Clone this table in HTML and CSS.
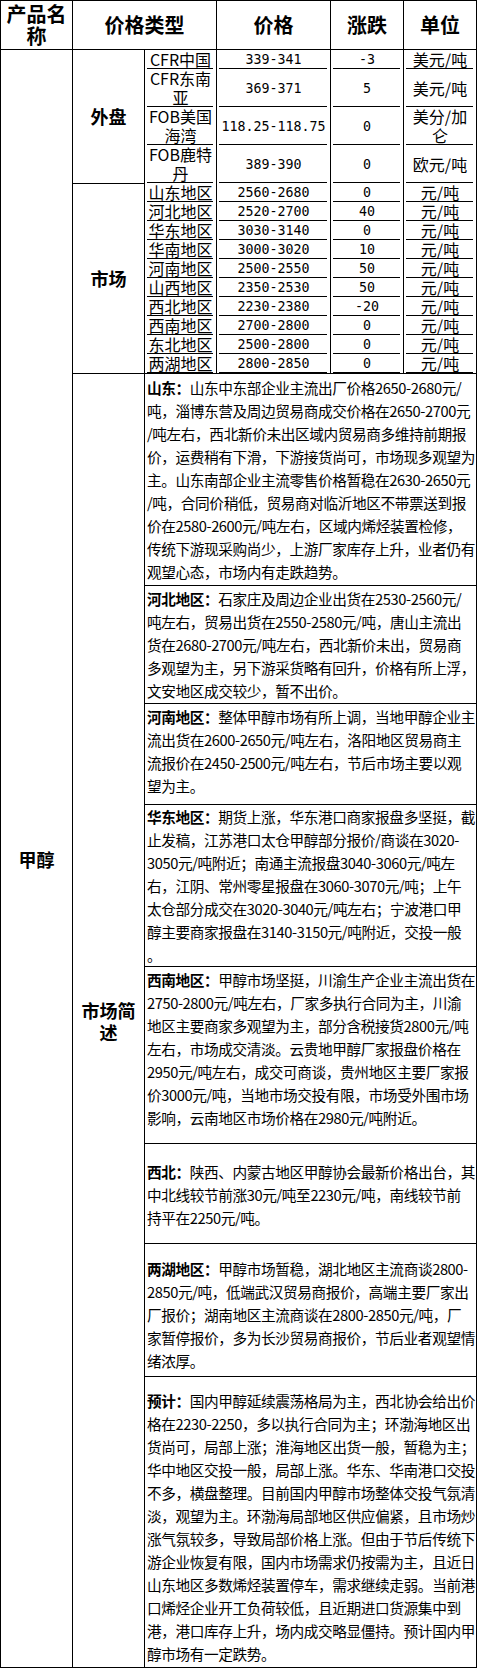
FILE: index.html
```html
<!DOCTYPE html>
<html lang="zh-CN">
<head>
<meta charset="utf-8">
<title>甲醇价格行情</title>
<link rel="stylesheet" href="styles.css">
</head>
<body>
<table class="price-table">
  <colgroup>
    <col class="c-name"><col class="c-type"><col class="c-sub"><col class="c-price"><col class="c-chg"><col class="c-unit">
  </colgroup>
  <tr class="head">
    <td>产品名称</td>
    <td colspan="2">价格类型</td>
    <td>价格</td>
    <td>涨跌</td>
    <td>单位</td>
  </tr>
  <tr>
    <td rowspan="15" class="label">甲醇</td>
    <td rowspan="4" class="label">外盘</td>
    <td class="cell">CFR中国</td><td class="cell num">339-341</td><td class="cell num">-3</td><td class="cell">美元/吨</td>
  </tr>
  <tr><td class="cell">CFR东南亚</td><td class="cell num">369-371</td><td class="cell num">5</td><td class="cell">美元/吨</td></tr>
  <tr><td class="cell">FOB美国海湾</td><td class="cell num">118.25-118.75</td><td class="cell num">0</td><td class="cell">美分/加仑</td></tr>
  <tr><td class="cell">FOB鹿特丹</td><td class="cell num">389-390</td><td class="cell num">0</td><td class="cell">欧元/吨</td></tr>
  <tr>
    <td rowspan="10" class="label">市场</td>
    <td class="cell">山东地区</td><td class="cell num">2560-2680</td><td class="cell num">0</td><td class="cell">元/吨</td>
  </tr>
  <tr><td class="cell">河北地区</td><td class="cell num">2520-2700</td><td class="cell num">40</td><td class="cell">元/吨</td></tr>
  <tr><td class="cell">华东地区</td><td class="cell num">3030-3140</td><td class="cell num">0</td><td class="cell">元/吨</td></tr>
  <tr><td class="cell">华南地区</td><td class="cell num">3000-3020</td><td class="cell num">10</td><td class="cell">元/吨</td></tr>
  <tr><td class="cell">河南地区</td><td class="cell num">2500-2550</td><td class="cell num">50</td><td class="cell">元/吨</td></tr>
  <tr><td class="cell">山西地区</td><td class="cell num">2350-2530</td><td class="cell num">50</td><td class="cell">元/吨</td></tr>
  <tr><td class="cell">西北地区</td><td class="cell num">2230-2380</td><td class="cell num">-20</td><td class="cell">元/吨</td></tr>
  <tr><td class="cell">西南地区</td><td class="cell num">2700-2800</td><td class="cell num">0</td><td class="cell">元/吨</td></tr>
  <tr><td class="cell">东北地区</td><td class="cell num">2500-2800</td><td class="cell num">0</td><td class="cell">元/吨</td></tr>
  <tr><td class="cell">两湖地区</td><td class="cell num">2800-2850</td><td class="cell num">0</td><td class="cell">元/吨</td></tr>
  <tr>
    <td class="label">市场简述</td>
    <td colspan="4" class="desc">
      <div class="blk blk-sd"><b>山东：</b>山东中东部企业主流出厂价格2650-2680元/<br>吨，淄博东营及周边贸易商成交价格在2650-2700元<br>/吨左右，西北新价未出区域内贸易商多维持前期报<br>价，运费稍有下滑，下游接货尚可，市场现多观望为<br>主。山东南部企业主流零售价格暂稳在2630-2650元<br>/吨，合同价稍低，贸易商对临沂地区不带票送到报<br>价在2580-2600元/吨左右，区域内烯烃装置检修，<br>传统下游现采购尚少，上游厂家库存上升，业者仍有<br>观望心态，市场内有走跌趋势。</div>
      <div class="blk blk-hb"><b>河北地区：</b>石家庄及周边企业出货在2530-2560元/<br>吨左右，贸易出货在2550-2580元/吨，唐山主流出<br>货在2680-2700元/吨左右，西北新价未出，贸易商<br>多观望为主，另下游采货略有回升，价格有所上浮，<br>文安地区成交较少，暂不出价。</div>
      <div class="blk blk-hn"><b>河南地区：</b>整体甲醇市场有所上调，当地甲醇企业主<br>流出货在2600-2650元/吨左右，洛阳地区贸易商主<br>流报价在2450-2500元/吨左右，节后市场主要以观<br>望为主。</div>
      <div class="blk blk-hd"><b>华东地区：</b>期货上涨，华东港口商家报盘多坚挺，截<br>止发稿，江苏港口太仓甲醇部分报价/商谈在3020-<br>3050元/吨附近；南通主流报盘3040-3060元/吨左<br>右，江阴、常州零星报盘在3060-3070元/吨；上午<br>太仓部分成交在3020-3040元/吨左右；宁波港口甲<br>醇主要商家报盘在3140-3150元/吨附近，交投一般<br>。</div>
      <div class="blk blk-xn"><b>西南地区：</b>甲醇市场坚挺，川渝生产企业主流出货在<br>2750-2800元/吨左右，厂家多执行合同为主，川渝<br>地区主要商家多观望为主，部分含税接货2800元/吨<br>左右，市场成交清淡。云贵地甲醇厂家报盘价格在<br>2950元/吨左右，成交可商谈，贵州地区主要厂家报<br>价3000元/吨，当地市场交投有限，市场受外围市场<br>影响，云南地区市场价格在2980元/吨附近。</div>
      <div class="blk blk-xb"><b>西北：</b>陕西、内蒙古地区甲醇协会最新价格出台，其<br>中北线较节前涨30元/吨至2230元/吨，南线较节前<br>持平在2250元/吨。</div>
      <div class="blk blk-lh"><b>两湖地区：</b>甲醇市场暂稳，湖北地区主流商谈2800-<br>2850元/吨，低端武汉贸易商报价，高端主要厂家出<br>厂报价；湖南地区主流商谈在2800-2850元/吨，厂<br>家暂停报价，多为长沙贸易商报价，节后业者观望情<br>绪浓厚。</div>
      <div class="blk blk-yj"><b>预计：</b>国内甲醇延续震荡格局为主，西北协会给出价<br>格在2230-2250，多以执行合同为主；环渤海地区出<br>货尚可，局部上涨；淮海地区出货一般，暂稳为主；<br>华中地区交投一般，局部上涨。华东、华南港口交投<br>不多，横盘整理。目前国内甲醇市场整体交投气氛清<br>淡，观望为主。环渤海局部地区供应偏紧，且市场炒<br>涨气氛较多，导致局部价格上涨。但由于节后传统下<br>游企业恢复有限，国内市场需求仍按需为主，且近日<br>山东地区多数烯烃装置停车，需求继续走弱。当前港<br>口烯烃企业开工负荷较低，且近期进口货源集中到<br>港，港口库存上升，场内成交略显僵持。预计国内甲<br>醇市场有一定跌势。</div>
    </td>
  </tr>
</table>
</body>
</html>
```

FILE: styles.css
```css
html, body {
  margin: 0;
  padding: 0;
  background: #fff;
}

body {
  font-family: "Noto Sans CJK SC", sans-serif;
  color: #000;
}

.price-table {
  border-collapse: collapse;
  table-layout: fixed;
  width: 476px;
}

.c-name, .c-type, .c-sub { width: 72px; }
.c-price { width: 114px; }
.c-chg, .c-unit { width: 73px; }

.price-table td {
  border: 1px solid #000;
  padding: 0 2px;
  text-align: center;
  vertical-align: middle;
}

.head td {
  font-size: 20px;
  line-height: 22px;
  font-weight: 700;
  padding: 2px 1px;
}

.price-table .label {
  font-size: 18px;
  line-height: 22px;
  font-weight: 700;
  padding: 0 3px;
}

.price-table .cell {
  border-top-style: none;
  border-bottom-style: none;
  font-size: 16px;
  line-height: 19px;
  font-weight: 400;
  padding: 0 3px;
  background-image: linear-gradient(#000, #000);
  background-repeat: no-repeat;
  background-size: calc(100% - 5px) 1px;
  background-position: 2px 100%;
}

.price-table .num {
  font-family: "DejaVu Sans Mono", "Liberation Mono", monospace;
  font-size: 13.3px;
}

.price-table .desc {
  padding: 0;
  text-align: left;
  vertical-align: top;
  font-size: 14.67px;
  line-height: 23px;
}

.blk {
  border-top: 1px solid #000;
  padding: 1px 0 1px 2px;
  white-space: nowrap;
  letter-spacing: -0.4px;
}

.blk:first-child { border-top: none; }

.blk b { font-weight: 700; }

.blk-sd { padding-top: 2px; padding-bottom: 2px; }
.blk-hn { padding-bottom: 7px; }
.blk-hd { padding-top: 0; padding-bottom: 0; }
.blk-xn { padding-bottom: 14px; }
.blk-xb { padding-top: 16px; padding-bottom: 14px; }
.blk-lh { padding-top: 13px; padding-bottom: 4px; }
.blk-yj { padding-top: 12px; padding-bottom: 2px; }
```
